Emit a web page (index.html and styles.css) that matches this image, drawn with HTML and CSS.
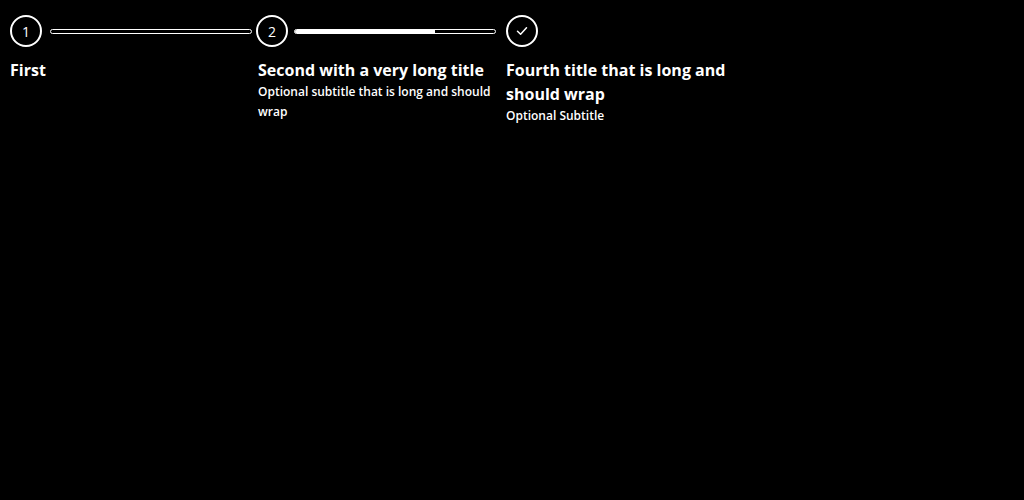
FILE: index.html
```html
<!DOCTYPE html>
<html>
<head>
<meta charset="utf-8">
<link rel="stylesheet" href="styles.css">
</head>
<body>
<div class="stepper">
  <div class="step step-1">
    <div class="head">
      <div class="circle">1</div>
      <div class="line line-1"><div class="fill" style="width:0%"></div></div>
    </div>
    <div class="text">
      <div class="title">First</div>
    </div>
  </div>
  <div class="step step-2">
    <div class="head">
      <div class="circle">2</div>
      <div class="line line-2"><div class="fill" style="width:70%"></div></div>
    </div>
    <div class="text text-2">
      <div class="title">Second with a very long title</div>
      <div class="subtitle">Optional subtitle that is long and should wrap</div>
    </div>
  </div>
  <div class="step step-3">
    <div class="head">
      <div class="circle">
        <svg width="14" height="14" viewBox="0 0 14 14"><path d="M2.5 7.2 L5.6 10.2 L11.5 3.8" fill="none" stroke="#fff" stroke-width="1.5" stroke-linecap="round" stroke-linejoin="round"/></svg>
      </div>
    </div>
    <div class="text">
      <div class="title">Fourth title that is long and should wrap</div>
      <div class="subtitle">Optional Subtitle</div>
    </div>
  </div>
</div>
</body>
</html>
```

FILE: styles.css
```css
html, body {
  margin: 0;
  background: #000;
  color: #fff;
  font-family: "Open Sans", "Liberation Sans", sans-serif;
}
.stepper {
  display: flex;
  padding: 15px 10px;
  align-items: flex-start;
}
.step {
  display: flex;
  flex-direction: column;
}
.step-1 { width: 246px; }
.step-2 { width: 250px; }
.step-3 { width: 240px; }
.head {
  display: flex;
  align-items: center;
  height: 32px;
}
.circle {
  box-sizing: border-box;
  width: 32px;
  height: 32px;
  border: 2px solid #fff;
  border-radius: 50%;
  display: flex;
  align-items: center;
  justify-content: center;
  font-size: 14px;
  font-weight: 500;
  flex: none;
}
.line {
  box-sizing: border-box;
  width: 202px;
  height: 5px;
  border: 1px solid #fff;
  border-radius: 3px;
  overflow: hidden;
}
.line-1 { margin: 0 4px 0 8px; }
.line-2 { margin: 0 10px 0 6px; }
.fill {
  height: 100%;
  background: #fff;
}
.text {
  margin-top: 11px;
  padding-right: 6px;
}
.text-2 { padding-left: 2px; }
.title {
  font-size: 16px;
  font-weight: 700;
  line-height: 24px;
}
.subtitle {
  font-size: 12px;
  font-weight: 600;
  line-height: 20px;
}
```
